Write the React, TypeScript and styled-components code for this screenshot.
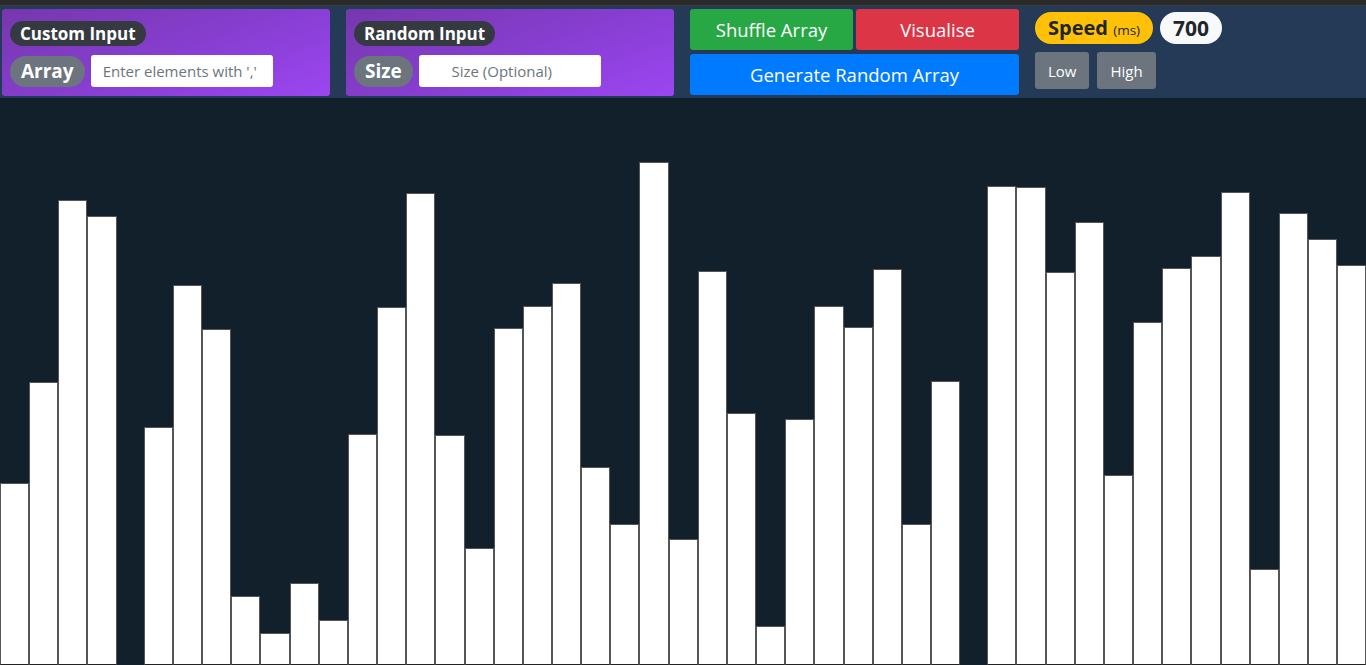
import React from 'react'
import styled, { createGlobalStyle } from 'styled-components'

const GlobalStyle = createGlobalStyle`
  html, body {
    margin: 0;
    padding: 0;
    background: #11202a;
    font-family: 'Open Sans', 'Noto Sans', sans-serif;
    overflow: hidden;
  }
`

const heights = [
  182, 283, 465, 449, 0, 238, 380, 336, 69, 32, 82, 45, 231, 358, 472, 230, 117,
  337, 359, 382, 198, 141, 503, 126, 394, 252, 39, 246, 359, 338, 396, 141, 284,
  0, 479, 478, 393, 443, 190, 343, 397, 409, 473, 96, 452, 426, 400,
]

const App = () => (
  <Page>
    <GlobalStyle />
    <TopStrip />
    <Header>
      <InputPanel>
        <Title>Custom Input</Title>
        <Row>
          <Label>Array</Label>
          <Field placeholder="Enter elements with ','" />
        </Row>
      </InputPanel>
      <InputPanel>
        <Title>Random Input</Title>
        <Row>
          <Label>Size</Label>
          <Field placeholder="Size (Optional)" $center />
        </Row>
      </InputPanel>
      <ButtonGrid>
        <Button $bg="#28a745">Shuffle Array</Button>
        <Button $bg="#dc3545">Visualise</Button>
        <Button $bg="#007bff" $wide>
          Generate Random Array
        </Button>
      </ButtonGrid>
      <SpeedBox>
        <Row>
          <SpeedBadge>
            Speed <small>(ms)</small>
          </SpeedBadge>
          <ValueBadge>700</ValueBadge>
        </Row>
        <Row>
          <SmallButton>Low</SmallButton>
          <SmallButton>High</SmallButton>
        </Row>
      </SpeedBox>
    </Header>
    <Chart>
      {heights.map((h, i) => (
        <Bar key={i} $empty={h === 0} style={{ height: h }} />
      ))}
    </Chart>
  </Page>
)

export default App

const Page = styled.div`
  width: 1366px;
  height: 665px;
  display: flex;
  flex-direction: column;
`

const TopStrip = styled.div`
  height: 5px;
  background: #2a2a2a;
  border-bottom: 1px solid #3d3d3d;
`

const Header = styled.div`
  height: 92px;
  box-sizing: border-box;
  padding: 3px 0 0 2px;
  background: #243a56;
  display: flex;
  align-items: flex-start;
  gap: 16px;
`

const InputPanel = styled.div`
  width: 328px;
  height: 87px;
  box-sizing: border-box;
  padding: 12px 8px 0;
  border-radius: 3px;
  background: linear-gradient(160deg, #7637ad 0%, #8a3fd6 60%, #9c46f2 100%);
  display: flex;
  flex-direction: column;
  gap: 9px;
`

const Row = styled.div`
  display: flex;
  align-items: center;
  gap: 6px;
`

const Title = styled.span`
  align-self: flex-start;
  height: 25px;
  line-height: 25px;
  padding: 0 10px;
  border-radius: 13px;
  background: #343a40;
  color: #fff;
  font-weight: 700;
  font-size: 17px;
`

const Label = styled.span`
  height: 31px;
  line-height: 30px;
  padding: 0 11px;
  border-radius: 16px;
  background: #6c757d;
  color: #fff;
  font-weight: 700;
  font-size: 19px;
`

const Field = styled.input<{ $center?: boolean }>`
  width: 182px;
  height: 32px;
  box-sizing: border-box;
  border: none;
  border-radius: 3px;
  padding: ${(p) => (p.$center ? '0 28px 0 12px' : '0 12px')};
  font-family: inherit;
  font-size: 15px;
  text-align: ${(p) => (p.$center ? 'center' : 'left')};
  &::placeholder {
    color: #6c757d;
  }
`

const ButtonGrid = styled.div`
  width: 329px;
  display: grid;
  grid-template-columns: 1fr 1fr;
  gap: 4px 3px;
`

const Button = styled.button<{ $bg: string; $wide?: boolean }>`
  grid-column: ${(p) => (p.$wide ? '1 / span 2' : 'auto')};
  height: 41px;
  border: none;
  border-radius: 3px;
  background: ${(p) => p.$bg};
  color: #fff;
  font-family: inherit;
  font-size: 18.5px;
`

const SpeedBox = styled.div`
  padding-top: 3px;
  display: flex;
  flex-direction: column;
  gap: 8px;
`

const SpeedBadge = styled.span`
  height: 32px;
  line-height: 32px;
  padding: 0 13px;
  border-radius: 16px;
  background: #ffc107;
  color: #212529;
  font-weight: 700;
  font-size: 20px;
  small {
    font-weight: 400;
    font-size: 13.5px;
  }
`

const ValueBadge = styled(SpeedBadge)`
  margin-left: 1px;
  padding: 0 13px;
  font-size: 21px;
  background: #f8f9fa;
`

const SmallButton = styled.button`
  height: 37px;
  padding: 0 13px;
  border: none;
  border-radius: 3px;
  background: #6c757d;
  color: #fff;
  font-family: inherit;
  font-size: 15px;
  margin-right: 2px;
`

const Chart = styled.div`
  flex: 1;
  display: flex;
  align-items: flex-end;
`

const Bar = styled.div<{ $empty: boolean }>`
  flex: 1;
  box-sizing: border-box;
  background: #fff;
  border: ${(p) => (p.$empty ? 'none' : '1px solid #555')};
  border-bottom-color: #222;
`
